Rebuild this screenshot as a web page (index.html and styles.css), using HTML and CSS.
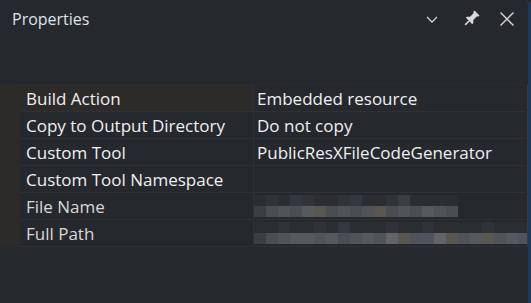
FILE: index.html
```html
<!DOCTYPE html>
<html>
<head>
<meta charset="utf-8">
<link rel="stylesheet" href="styles.css">
</head>
<body>
<div class="window">
  <div class="titlebar">
    <span class="title">Properties</span>
    <div class="tools">
      <svg class="ico chev" width="16" height="16" viewBox="0 0 16 16"><path d="M3 6 L8 11 L13 6" fill="none" stroke="#d0d0d0" stroke-width="1.3"/></svg>
      <svg class="ico" width="20" height="20" viewBox="0 0 20 20"><g transform="rotate(45 10 10)"><path d="M6.5 1.5 H13.5 V3 L12.3 4.2 V9 L14.5 11.2 V12.8 H5.5 V11.2 L7.7 9 V4.2 L6.5 3 Z" fill="#d8d8d8"/><rect x="9.2" y="12.8" width="1.6" height="5.5" fill="#d8d8d8"/></g></svg>
      <svg class="ico" width="18" height="18" viewBox="0 0 18 18"><path d="M2.5 2.5 L15.5 15.5 M15.5 2.5 L2.5 15.5" stroke="#d8d8d8" stroke-width="1.4"/></svg>
    </div>
  </div>
  <div class="grid">
    <div class="gutter"></div>
    <div class="rows">
      <div class="row sel"><div class="name">Build Action</div><div class="val">Embedded resource</div></div>
      <div class="row"><div class="name">Copy to Output Directory</div><div class="val">Do not copy</div></div>
      <div class="row"><div class="name">Custom Tool</div><div class="val">PublicResXFileCodeGenerator</div></div>
      <div class="row"><div class="name">Custom Tool Namespace</div><div class="val"></div></div>
      <div class="row"><div class="name dim">File Name</div><div class="val blur">
        <div class="mrow"><i class="a"></i><i class="b"></i><i class="a"></i><i class="c"></i><i class="b"></i><i class="a"></i><i class="a"></i><i class="b"></i><i class="c"></i><i class="a"></i><i class="a"></i><i class="b"></i><i class="e"></i><i class="a"></i><i class="a"></i><i class="a"></i><i class="a"></i></div>
        <div class="mrow"><i class="d"></i><i class="f"></i><i class="g"></i><i class="f"></i><i class="h"></i><i class="i"></i><i class="f"></i><i class="g"></i><i class="f"></i><i class="g"></i><i class="i"></i><i class="f"></i><i class="g"></i><i class="f"></i><i class="h"></i><i class="g"></i><i class="f"></i></div>
      </div></div>
      <div class="row"><div class="name dim">Full Path</div><div class="val blur">
        <div class="mrow"><i class="a"></i><i class="a"></i><i class="b"></i><i class="a"></i><i class="a"></i><i class="b"></i><i class="a"></i><i class="c"></i><i class="a"></i><i class="a"></i><i class="a"></i><i class="b"></i><i class="a"></i><i class="a"></i><i class="b"></i><i class="a"></i><i class="a"></i><i class="a"></i><i class="a"></i><i class="b"></i><i class="a"></i><i class="a"></i><i class="a"></i></div>
        <div class="mrow"><i class="d"></i><i class="f"></i><i class="g"></i><i class="h"></i><i class="h"></i><i class="g"></i><i class="h"></i><i class="f"></i><i class="g"></i><i class="h"></i><i class="g"></i><i class="j"></i><i class="i"></i><i class="g"></i><i class="k"></i><i class="j"></i><i class="i"></i><i class="g"></i><i class="h"></i><i class="i"></i><i class="g"></i><i class="h"></i><i class="k"></i></div>
      </div></div>
    </div>
  </div>
</div>
</body>
</html>
```
FILE: styles.css
```css
html, body {
  margin: 0;
  padding: 0;
  background: #25282d;
}
.window {
  width: 528px;
  height: 303px;
  border-right: 3px solid #1d3a5e;
  border-top-right-radius: 6px;
  background: #25282d;
  font-family: "Open Sans", "Noto Sans", sans-serif;
  color: #f0f0f0;
  display: flex;
  flex-direction: column;
}
.titlebar {
  height: 38px;
  display: flex;
  align-items: center;
  padding-left: 12px;
  padding-right: 12px;
}
.title {
  font-size: 16px;
  color: #dde3ea;
  flex: 1;
}
.tools {
  display: flex;
  align-items: center;
  gap: 17px;
}
.ico { display: block; }
.chev { margin-right: 4px; }
.grid {
  margin-top: 46px;
  display: flex;
}
.gutter {
  width: 20px;
  flex: none;
  background: #2c2b29;
}
.rows {
  flex: 1;
  min-width: 0;
  display: flex;
  flex-direction: column;
  border-top: 1px solid #2b2d31;
}
.row {
  display: flex;
  height: 26px;
  border-bottom: 1px solid #2f3136;
}
.name {
  flex: none;
  width: 227px;
  padding-left: 6px;
  padding-top: 1px;
  font-size: 17px;
  line-height: 25px;
  border-right: 1px solid #2f3136;
  white-space: nowrap;
}
.row.sel .name { background: #2c2b29; }
.name.dim { color: #d8d8d8; }
.val {
  flex: 1;
  min-width: 0;
  padding-left: 3px;
  padding-top: 1px;
  font-size: 17px;
  line-height: 25px;
  border-right: 1px solid #3a3c40;
  white-space: nowrap;
  overflow: hidden;
}
.val.blur {
  padding-left: 0;
  padding-top: 0;
  display: flex;
  flex-direction: column;
  justify-content: center;
}
.mrow { display: flex; height: 11px; }
.mrow i { display: block; width: 12px; height: 11px; flex: none; }
.a { background: #2a2d32; }
.b { background: #303338; }
.c { background: #34373d; }
.e { background: #3a3d42; }
.d { background: #3b3e43; }
.f { background: #4a4d52; }
.g { background: #505358; }
.h { background: #56595e; }
.i { background: #5a5650; }
.j { background: #626468; }
.k { background: #4f555f; }
```
